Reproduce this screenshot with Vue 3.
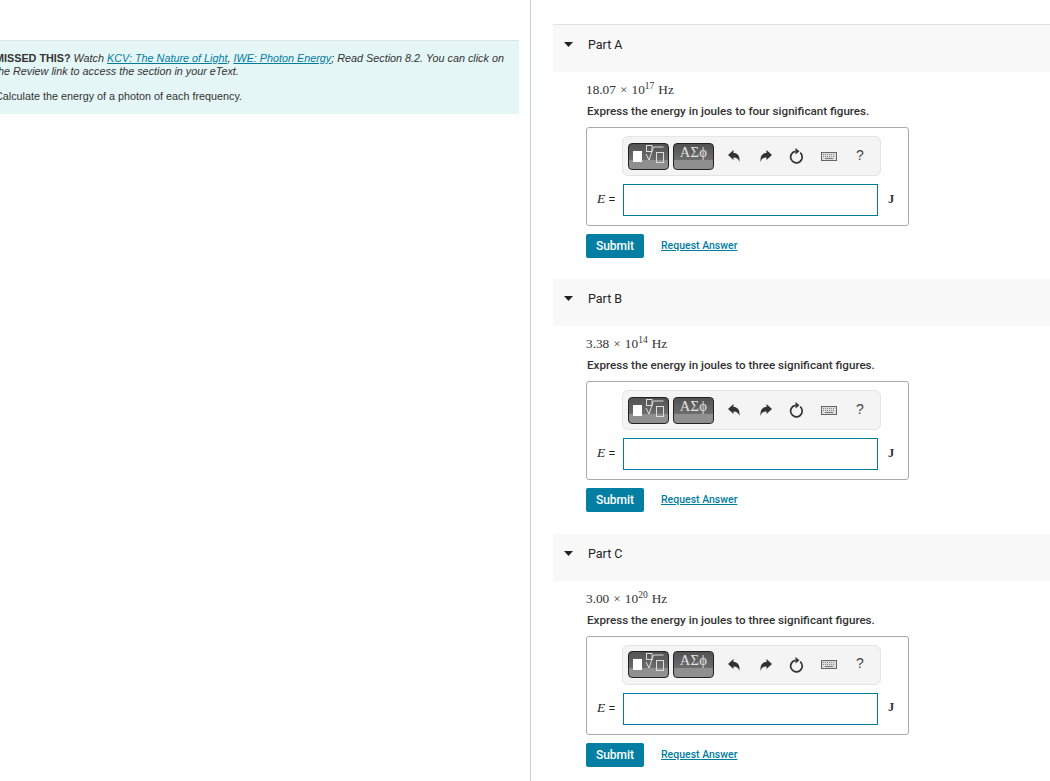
<script setup>
const parts = [
  { id: 'A', base: '18.07', exp: '17', text: 'four' },
  { id: 'B', base: '3.38', exp: '14', text: 'three' },
  { id: 'C', base: '3.00', exp: '20', text: 'three' },
]
</script>

<template>
  <div class="page">
    <aside class="left">
      <div class="intro">
        <p class="missed"><b>MISSED THIS?</b> <i>Watch <a>KCV: The Nature of Light</a>, <a>IWE: Photon Energy</a>; Read Section 8.2. You can click on<br>the Review link to access the section in your eText.</i></p>
        <p class="calc">Calculate the energy of a photon of each frequency.</p>
      </div>
    </aside>
    <main class="right">
      <section v-for="p in parts" :key="p.id" class="part">
        <header class="head">
          <svg class="caret" width="9" height="5" viewBox="0 0 9 5"><path d="M0 0h9L4.500 5z" fill="#222"/></svg>
          <span>Part {{ p.id }}</span>
        </header>
        <div class="body">
          <div class="math">{{ p.base }} <span class="times">×</span> 10<sup>{{ p.exp }}</sup> Hz</div>
          <div class="prompt">Express the energy in joules to {{ p.text }} significant figures.</div>
          <div class="box">
            <div class="toolbar">
              <button class="tb t1">
                <svg width="41" height="27" viewBox="0 0 41 27">
                  <rect x="5" y="8" width="9" height="11" fill="#fff"/>
                  <g fill="none" stroke="#ddd" stroke-width="1">
                    <rect x="18.500" y="2.500" width="5.500" height="6"/>
                    <path d="M18 11l3 6 4.500-13H35.500"/>
                    <rect x="28.500" y="9.500" width="7" height="10"/>
                  </g>
                </svg>
              </button>
              <button class="tb t2">ΑΣϕ</button>
              <div class="tools">
                <svg class="ic" width="12" height="12" viewBox="0 0 12 12"><path d="M0 5L5.500 0V3C9.500 3 12 5.500 11.500 12C10.500 9 9 7.500 5.500 7.500V10z" fill="#333"/></svg>
                <svg class="ic" width="12" height="12" viewBox="0 0 12 12"><path d="M12 5L6.500 0V3C2.500 3 0 5.500 .5 12C1.500 9 3 7.500 6.500 7.500V10z" fill="#333"/></svg>
                <svg class="ic" width="15" height="16" viewBox="0 0 15 16"><path d="M11.200 4.600A5.800 5.800 0 1 1 6.500 3.300" fill="none" stroke="#333" stroke-width="1.700"/><path d="M6.500 0v6.500L10.500 3.200z" fill="#333"/></svg>
                <svg class="ic" width="16" height="9" viewBox="0 0 16 9"><rect x=".5" y=".5" width="15" height="8" fill="#ddd" stroke="#666"/><path d="M2 2.500h12M2 4.500h12" stroke="#888" stroke-dasharray="1 1"/><path d="M4 6.500h8" stroke="#777"/></svg>
                <span class="help">?</span>
              </div>
            </div>
            <div class="row">
              <span class="lhs"><i>E</i> <span class="eq">=</span></span>
              <div class="field"></div>
              <span class="unit">J</span>
            </div>
          </div>
          <div class="actions">
            <button class="submit">Submit</button>
            <a class="req">Request Answer</a>
          </div>
        </div>
      </section>
    </main>
  </div>
</template>

<style scoped>
.page {
  display: flex;
  height: 781px;
  overflow: hidden;
  background: #fff;
  font-family: "Liberation Sans", Arial, sans-serif;
}
.left {
  width: 530px;
  flex: none;
  border-right: 1px solid #bdd0e0;
  overflow: hidden;
}
.intro {
  margin: 40px 11px 0 -5px;
  padding: 11px 0 0;
  height: 74px;
  box-sizing: border-box;
  background: #e5f6f7;
  border-top: 1px solid #dde5e8;
  font-size: 10.800px;
  line-height: 13px;
  color: #333;
}
.missed { margin: 0; white-space: nowrap; }
.intro a { color: #007c9f; text-decoration: underline; }
.calc { margin: 12px 0 0; }
.right {
  flex: 1;
  margin-left: 22px;
  padding-top: 24px;
}
.part { height: 254.250px; }
.head {
  height: 48px;
  box-sizing: border-box;
  border-top: 1px solid #fff;
  background: #f8f8f8;
  display: flex;
  align-items: center;
  padding: 0 0 8px 11px;
  font-family: Roboto, sans-serif;
  font-size: 12.500px;
  color: #222;
}
.part:first-child .head { border-top-color: #e2e2e2; }
.caret { margin-right: 15px; }
.body { padding: 9px 0 0 33px; width: 323px; }
.math {
  font-family: "Liberation Serif", serif;
  font-size: 13.300px;
  line-height: 18px;
  word-spacing: .7px;
  color: #333;
}
.math sup { font-size: 9.500px; line-height: 0; }
.times { color: #444; }
.prompt {
  margin-top: 5px;
  margin-left: 1px;
  font-family: Roboto, sans-serif;
  font-size: 11.650px;
  font-weight: 500;
  line-height: 14px;
  color: #333;
}
.box {
  margin-top: 9px;
  width: 323px;
  height: 99px;
  box-sizing: border-box;
  border: 1px solid #aaa;
  border-radius: 3px;
  padding: 8px 0 0 35px;
}
.toolbar {
  width: 259px;
  height: 40px;
  box-sizing: border-box;
  background: #f4f4f4;
  border: 1px solid #e4e4e4;
  border-radius: 6px;
  display: flex;
  align-items: center;
  padding-left: 5px;
  gap: 4px;
}
.tb {
  width: 41px;
  height: 27px;
  padding: 0;
  border: 1px solid #222;
  border-radius: 4px;
  background: linear-gradient(#525252 0, #6c6c6c 62%, #8f8f8f 66%, #8f8f8f 100%);
  display: flex;
  justify-content: center;
}
.t1 svg { margin: -1px; flex: none; }
.t2 {
  font-family: "Liberation Serif", serif;
  font-size: 14.500px;
  line-height: 17px;
  color: #e4e4e4;
  letter-spacing: .4px;
}
.tools { flex: 1; height: 100%; display: flex; align-items: center; }
.ic { flex: none; }
.tools .ic:nth-child(1) { margin-left: 10px; }
.tools .ic:nth-child(2) { margin-left: 20px; }
.tools .ic:nth-child(3) { margin-left: 17px; }
.tools .ic:nth-child(4) { margin-left: 17px; }
.help {
  margin-left: 19px;
  font-family: "Liberation Sans", sans-serif;
  font-size: 14px;
  line-height: 14px;
  margin-top: -3px;
  color: #444;
}
.row {
  display: flex;
  align-items: center;
  margin-top: 8px;
  margin-left: -25px;
}
.lhs {
  width: 26px;
  flex: none;
  margin-top: -2px;
  font-family: "Liberation Serif", serif;
  font-size: 13.500px;
  color: #222;
  white-space: nowrap;
}
.eq { font-family: "Liberation Sans", sans-serif; font-size: 11px; }
.field {
  width: 255px;
  height: 32px;
  box-sizing: border-box;
  border: 1px solid #007c9f;
  background: #fff;
  flex: none;
}
.unit {
  margin-left: 10px;
  margin-top: -2px;
  font-family: "Liberation Serif", serif;
  font-size: 12.500px;
  font-weight: 700;
  color: #333;
}
.actions {
  display: flex;
  align-items: center;
  margin-top: 8px;
}
.submit {
  width: 58px;
  height: 24px;
  padding: 0;
  border: 0;
  border-radius: 2px;
  background: #047fa3;
  color: #fff;
  font-family: Roboto, sans-serif;
  font-size: 12px;
  font-weight: 500;
}
.req {
  margin-left: 17px;
  margin-bottom: 1px;
  font-family: Roboto, sans-serif;
  font-size: 10.500px;
  font-weight: 500;
  color: #007c9f;
  text-decoration: underline;
}
</style>
